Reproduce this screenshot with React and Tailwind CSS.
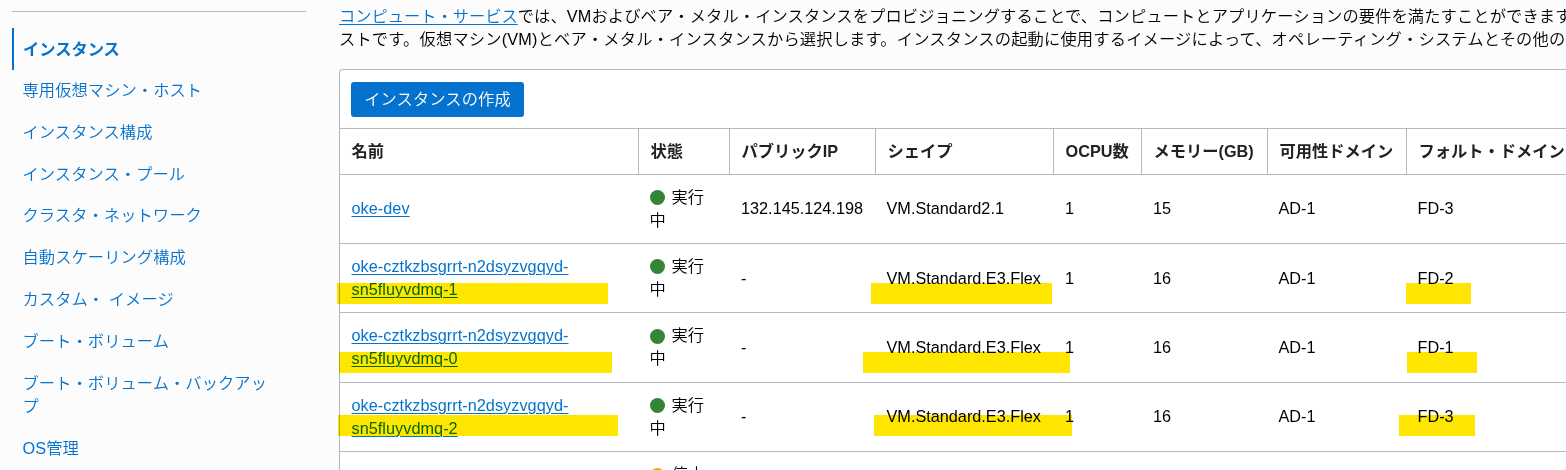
import React from 'react';

const navItems = [
  '専用仮想マシン・ホスト',
  'インスタンス構成',
  'インスタンス・プール',
  'クラスタ・ネットワーク',
  '自動スケーリング構成',
  'カスタム・ イメージ',
  'ブート・ボリューム',
  'ブート・ボリューム・バックアップ',
  'OS管理',
];

const columns = ['名前', '状態', 'パブリックIP', 'シェイプ', 'OCPU数', 'メモリー(GB)', '可用性ドメイン', 'フォルト・ドメイン'];

const instances = [
  { name: 'oke-dev', ip: '132.145.124.198', shape: 'VM.Standard2.1', ocpu: 1, memory: 15, ad: 'AD-1', fd: 'FD-3' },
  { name: 'oke-cztkzbsgrrt-n2dsyzvgqyd-sn5fluyvdmq-1', ip: '-', shape: 'VM.Standard.E3.Flex', ocpu: 1, memory: 16, ad: 'AD-1', fd: 'FD-2' },
  { name: 'oke-cztkzbsgrrt-n2dsyzvgqyd-sn5fluyvdmq-0', ip: '-', shape: 'VM.Standard.E3.Flex', ocpu: 1, memory: 16, ad: 'AD-1', fd: 'FD-1' },
  { name: 'oke-cztkzbsgrrt-n2dsyzvgqyd-sn5fluyvdmq-2', ip: '-', shape: 'VM.Standard.E3.Flex', ocpu: 1, memory: 16, ad: 'AD-1', fd: 'FD-3' },
];

// marker strokes laid over the table
const markers = [
  'left-[337px] top-[283px] w-[271px]',
  'left-[871px] top-[283px] w-[181px]',
  'left-[1406px] top-[283px] w-[65px]',
  'left-[339px] top-[352px] w-[273px]',
  'left-[863px] top-[352px] w-[207px]',
  'left-[1407px] top-[352px] w-[70px]',
  'left-[338px] top-[415px] w-[280px]',
  'left-[874px] top-[415px] w-[198px]',
  'left-[1399px] top-[415px] w-[76px]',
];

const rowGrid = 'grid grid-cols-[299px_91px_146px_178px_88px_126px_139px_200px]';

const Sidebar = () => (
  <nav className="w-[294px] ml-3 mt-[11px] shrink-0 border-t border-[#b4bac0] text-[#0572ce]">
    <div className="mt-4 h-[42px] border-l-2 border-[#0572ce] pl-[9px] pt-[9.5px] font-bold">インスタンス</div>
    {navItems.map((item) => (
      <a key={item} href="#" className="block pl-[10.5px] pr-9 pt-[9px] pb-[9.6px] tracking-[0.08px]">
        {item}
      </a>
    ))}
  </nav>
);

const Status = ({ color, label }) => (
  <div className="pl-[10.5px] pr-3">
    <span className={`inline-block size-[15px] rounded-full align-[-2.5px] mr-[7px] ${color}`} />
    {label}
  </div>
);

const InstanceRow = ({ instance }) => (
  <div className={`${rowGrid} h-[69.27px] items-center border-b border-[#b4bac0]`}>
    <div className="pl-[11.5px] pr-14 tracking-[0.04px]">
      <a href="#" className="text-[#0572ce] underline underline-offset-2 decoration-1">{instance.name}</a>
    </div>
    <Status color="bg-[#348537]" label="実行中" />
    <div className="pl-[11px]">{instance.ip}</div>
    <div className="pl-[10.5px]">{instance.shape}</div>
    <div className="pl-[11px]">{instance.ocpu}</div>
    <div className="pl-[11px]">{instance.memory}</div>
    <div className="pl-[10.5px]">{instance.ad}</div>
    <div className="pl-[10.5px]">{instance.fd}</div>
  </div>
);

const App = () => {
  return (
    <div className="relative flex h-[470px] w-[1566px] overflow-hidden bg-[#fcfcfc] font-['Liberation_Sans','Noto_Sans_CJK_JP',sans-serif] text-[16.25px] font-[350] leading-[23.2px] text-black">
      <Sidebar />

      <main className="ml-[33px] w-[1268px] shrink-0">
        <p className="h-[69px] whitespace-nowrap pt-[4.5px]">
          <a href="#" className="text-[#0572ce] underline underline-offset-2 decoration-1">コンピュート・サービス</a>
          <span className="tracking-[0.12px]">
            では、VMおよびベア・メタル・インスタンスをプロビジョニングすることで、コンピュートとアプリケーションの要件を満たすことができます
          </span>
          <br />
          <span className="tracking-[0.18px]">
            ストです。仮想マシン(VM)とベア・メタル・インスタンスから選択します。インスタンスの起動に使用するイメージによって、オペレーティング・システムとその他の
          </span>
        </p>

        <div className="rounded-tl border-l border-t border-[#b4bac0] bg-white">
          <div className="h-[58px] pl-[11px] pt-3">
            <button className="h-[35px] w-[173px] rounded-[3px] bg-[#0572ce] text-white tracking-[0.1px]">インスタンスの作成</button>
          </div>

          <div className={`${rowGrid} h-[46.8px] border-y border-[#b4bac0] font-bold text-[#222]`}>
            {columns.map((column) => (
              <div key={column} className="flex items-center whitespace-nowrap border-r border-[#b4bac0] pl-[11.5px]">
                {column}
              </div>
            ))}
          </div>

          {instances.map((instance) => (
            <InstanceRow key={instance.name} instance={instance} />
          ))}

          <div className={`${rowGrid} h-[69.27px] items-center`}>
            <div />
            <Status color="bg-[#f5a30a]" label="停止中" />
          </div>
        </div>
      </main>

      {markers.map((marker) => (
        <div key={marker} className={`absolute h-[21px] bg-[#ffe600] mix-blend-multiply ${marker}`} />
      ))}
    </div>
  );
};

export default App;
